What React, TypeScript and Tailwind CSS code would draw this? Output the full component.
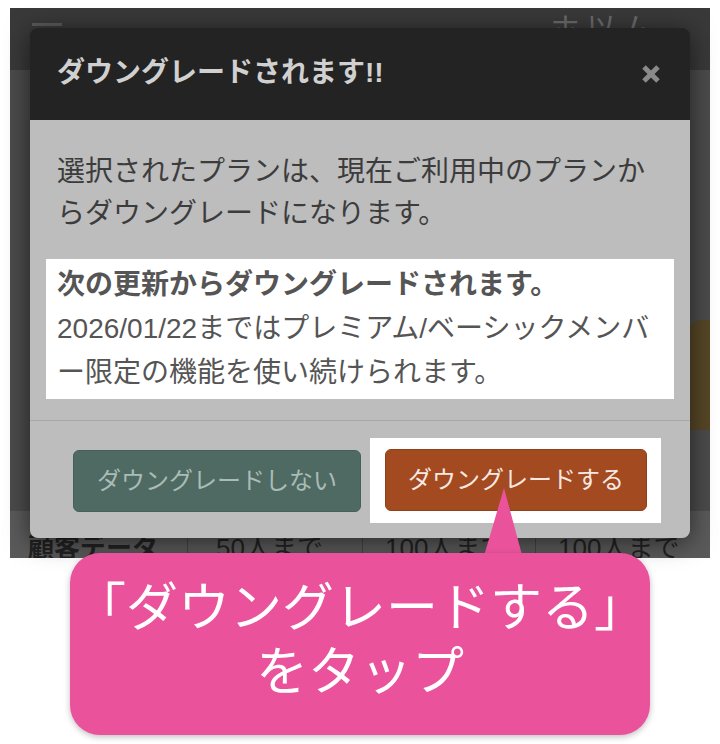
const FONT = "font-['Liberation_Sans','Noto_Sans_CJK_JP',sans-serif]";

function BackgroundPage() {
  return (
    <div className="w-[700px] h-[550px] flex flex-col bg-[#4b4b4b] overflow-hidden">
      <div className="h-[62px] bg-[#393939] flex justify-between px-[22px]">
        <div className="w-[30px] h-[3px] mt-[15px] bg-[#5a5a5a]" />
        <div className="text-[30px] leading-none text-[#6a6a6a] mt-[6px] mr-[30px] tracking-[6px]">ホ以ム</div>
      </div>
      <div className="flex-1 flex justify-end pt-[250px]">
        <div className="w-[22px] h-[110px] rounded-tl-[14px] bg-[#554626]" />
      </div>
      <div className="h-[53px] bg-[#5a5a5a] flex items-end text-[26px] leading-[32px] text-[#222] -mb-[6px]">
        <div className="w-[177px] pl-[18px] font-bold">顧客データ</div>
        <div className="w-[175px] pl-[28px] border-l border-[#444]">50人まで</div>
        <div className="w-[173px] pl-[22px] border-l border-[#444]">100人まで</div>
        <div className="flex-1 pl-[22px] border-l border-[#444]">100人まで</div>
      </div>
    </div>
  );
}

function DowngradeModal() {
  return (
    <div className="absolute left-[20px] top-[20px] w-[660px] rounded-[8px] overflow-hidden shadow-[0_4px_24px_rgba(0,0,0,0.55)]">
      <div className="h-[92px] bg-[#232323] flex items-center justify-between pl-[27px] pr-[28px]">
        <h3 className="text-[28px] font-bold text-[#d0d0d0] leading-none pb-[2px]">ダウングレードされます!!</h3>
        <svg width="20" height="20" viewBox="0 0 20 20" className="mr-[1px]">
          <path d="M3 3 L17 17 M17 3 L3 17" stroke="#8a8a8a" strokeWidth="5" strokeLinecap="butt" />
        </svg>
      </div>
      <div className="bg-[#bdbdbd]">
        <div className="px-[16px] pt-[31px] pb-[21px] border-b border-[#a8a8a8]">
          <p className="px-[11px] text-[28px] leading-[42px] text-[#3c3c3c]">
            選択されたプランは、現在ご利用中のプランからダウングレードになります。
          </p>
          <div className="mt-[24px] bg-white px-[11px] py-[4px] text-[28px] leading-[44px] text-[#555]">
            <p className="font-bold">次の更新からダウングレードされます。</p>
            <p>2026/01/22まではプレミアム/ベーシックメンバー限定の機能を使い続けられます。</p>
          </div>
        </div>
        <div className="flex items-center gap-[9px] pl-[43px] pt-[17px] pb-[15px]">
          <button className="w-[288px] h-[62px] rounded-[6px] bg-[#4f6a63] border border-[#45605a] text-[24px] text-[#a9bcb6]">
            ダウングレードしない
          </button>
          <div className="bg-white pt-[11px] pb-[12px] pl-[15px] pr-[14px]">
            <button className="w-[262px] h-[62px] rounded-[6px] bg-[#a34a20] border border-[#8e4019] text-[24px] text-[#f6e9e2]">
              ダウングレードする
            </button>
          </div>
        </div>
      </div>
    </div>
  );
}

export default function App() {
  return (
    <div className={`relative w-[720px] h-[744px] bg-white pt-[8px] pl-[10px] ${FONT}`}>
      <div className="relative w-[700px] h-[550px]">
        <BackgroundPage />
        <DowngradeModal />
      </div>
      <svg className="absolute left-[470px] top-[486px]" width="70" height="80" viewBox="0 0 70 80">
        <polygon points="11,80 55,80 34,2" fill="#ea529c" />
      </svg>
      <div className="absolute left-[70px] top-[553px] w-[580px] h-[182px] rounded-[30px] bg-[#ea529c] shadow-[0_2px_6px_rgba(0,0,0,0.25)] flex items-center justify-center pb-[16px]">
        <p className="text-center text-white text-[52px] leading-[64px] font-['Noto_Sans_CJK_JP',sans-serif]">
          「ダウングレードする」
          <br />
          をタップ
        </p>
      </div>
    </div>
  );
}
